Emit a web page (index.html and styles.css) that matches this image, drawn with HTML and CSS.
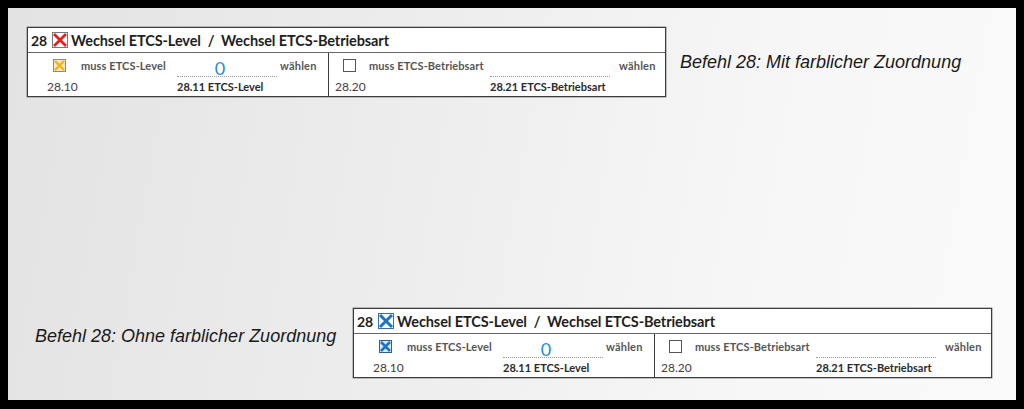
FILE: index.html
```html
<!DOCTYPE html>
<html lang="de">
<head>
<meta charset="utf-8">
<title>Befehl 28</title>
<link rel="stylesheet" href="styles.css">
</head>
<body>
<div class="frame">
  <div class="row1">
    <div class="panel">
      <div class="head">
        <span class="num">28</span>
        <svg class="hchk" width="16" height="16" viewBox="0 0 16 16"><rect x="0.5" y="0.5" width="15" height="15" fill="#fff" stroke="#777"/><path d="M2 2 L14 14 M14 2 L2 14" stroke="#e8201c" stroke-width="2.8" stroke-linecap="butt"/></svg>
        <span class="title">Wechsel ETCS-Level&nbsp; /&nbsp; Wechsel ETCS-Betriebsart</span>
      </div>
      <div class="body">
        <div class="cell c1">
          <div class="r1">
            <svg class="chk" width="13" height="13" viewBox="0 0 13 13"><rect x="0.5" y="0.5" width="12" height="12" fill="#f3e7c8" stroke="#8a8a8a"/><path d="M2 2 L11 11 M11 2 L2 11" stroke="#f6b400" stroke-width="2.4" stroke-linecap="butt"/></svg>
            <span class="lbl">muss ETCS-Level</span>
          </div>
          <div class="field"><span class="val">0</span></div>
          <span class="waehlen">wählen</span>
          <span class="id">28.10</span>
          <span class="flbl">28.11 ETCS-Level</span>
        </div>
        <div class="cell c2">
          <div class="r1">
            <svg class="chk" width="13" height="13" viewBox="0 0 13 13"><rect x="0.5" y="0.5" width="12" height="12" fill="#fff" stroke="#555"/></svg>
            <span class="lbl">muss ETCS-Betriebsart</span>
          </div>
          <div class="field"></div>
          <span class="waehlen">wählen</span>
          <span class="id">28.20</span>
          <span class="flbl">28.21 ETCS-Betriebsart</span>
        </div>
      </div>
    </div>
    <div class="caption cap1">Befehl 28: Mit farblicher Zuordnung</div>
  </div>
  <div class="row2">
    <div class="caption cap2">Befehl 28: Ohne farblicher Zuordnung</div>
    <div class="panel">
      <div class="head">
        <span class="num">28</span>
        <svg class="hchk" width="16" height="16" viewBox="0 0 16 16"><rect x="0.5" y="0.5" width="15" height="15" fill="#fff" stroke="#3a6ea8"/><path d="M2 2 L14 14 M14 2 L2 14" stroke="#1b75c4" stroke-width="3" stroke-linecap="butt"/></svg>
        <span class="title">Wechsel ETCS-Level&nbsp; /&nbsp; Wechsel ETCS-Betriebsart</span>
      </div>
      <div class="body">
        <div class="cell c1">
          <div class="r1">
            <svg class="chk" width="13" height="13" viewBox="0 0 13 13"><rect x="0.5" y="0.5" width="12" height="12" fill="#dbe9f6" stroke="#2a5f99"/><path d="M2 2 L11 11 M11 2 L2 11" stroke="#1b75c4" stroke-width="2.6" stroke-linecap="butt"/></svg>
            <span class="lbl">muss ETCS-Level</span>
          </div>
          <div class="field"><span class="val">0</span></div>
          <span class="waehlen">wählen</span>
          <span class="id">28.10</span>
          <span class="flbl">28.11 ETCS-Level</span>
        </div>
        <div class="cell c2">
          <div class="r1">
            <svg class="chk" width="13" height="13" viewBox="0 0 13 13"><rect x="0.5" y="0.5" width="12" height="12" fill="#fff" stroke="#555"/></svg>
            <span class="lbl">muss ETCS-Betriebsart</span>
          </div>
          <div class="field"></div>
          <span class="waehlen">wählen</span>
          <span class="id">28.20</span>
          <span class="flbl">28.21 ETCS-Betriebsart</span>
        </div>
      </div>
    </div>
  </div>
</div>
</body>
</html>
```

FILE: styles.css
```css
html, body {
  margin: 0;
  padding: 0;
  background: #000;
}
body {
  width: 1024px;
  height: 409px;
  overflow: hidden;
}
.frame {
  margin: 8px;
  width: 1008px;
  height: 392px;
  box-sizing: border-box;
  padding: 19px 0 0 19px;
  background: linear-gradient(100deg, #e3e3e3 0%, #ededed 40%, #f7f7f7 75%, #fafafa 100%);
  font-family: Lato, "Liberation Sans", sans-serif;
}
.row1 {
  display: flex;
  align-items: center;
}
.row2 {
  display: flex;
  align-items: flex-start;
  margin-top: 211px;
  margin-left: 8px;
}
.caption {
  font-family: "Liberation Sans", Arial, sans-serif;
  font-style: italic;
  font-size: 18px;
  line-height: 21px;
  color: #1a1a1a;
  white-space: nowrap;
}
.cap1 {
  margin-left: 14px;
  margin-top: 1px;
}
.cap2 {
  width: 318px;
  margin-top: 18px;
}
.panel {
  width: 639px;
  height: 70px;
  box-sizing: border-box;
  border: 1px solid #3c3c3c;
  background: #fff;
  display: flex;
  flex-direction: column;
  box-shadow: 0 0 0 0.5px #888;
}
.head {
  height: 24px;
  border-bottom: 1px solid #666;
  display: flex;
  align-items: center;
  padding-left: 3px;
  color: #1e1e1e;
}
.num {
  font-size: 14px;
  font-weight: 700;
  width: 21px;
  margin-top: 1px;
}
.hchk {
  display: block;
}
.title {
  font-size: 14.5px;
  font-weight: 700;
  margin-left: 3px;
  letter-spacing: -0.1px;
}
.body {
  flex: 1;
  display: flex;
}
.cell {
  display: grid;
  grid-template-rows: 25px 17px;
  align-items: start;
  font-size: 11px;
  font-weight: 700;
}
.c1 {
  width: 300px;
  border-right: 1px solid #3c3c3c;
  grid-template-columns: 149px 100px auto;
}
.c2 {
  flex: 1;
  grid-template-columns: 161px 120px auto;
}
.r1 {
  display: flex;
  align-items: flex-start;
  padding-top: 6px;
}
.c1 .r1 { padding-left: 25px; }
.c2 .r1 { padding-left: 14px; }
.chk {
  display: block;
  flex: none;
}
.lbl {
  color: #555;
  line-height: 13px;
  letter-spacing: 0.1px;
}
.c1 .lbl { margin-left: 15px; }
.c2 .lbl { margin-left: 13px; }
.field {
  height: 24px;
  box-sizing: border-box;
  border-bottom: 1px dotted #9a9a9a;
  text-align: center;
  padding-top: 7px;
}
.val {
  color: #1f8ed6;
  font-size: 18px;
  font-weight: 400;
  line-height: 16px;
  display: inline-block;
  margin-left: -14px;
}
.waehlen {
  color: #555;
  line-height: 13px;
  padding-top: 6px;
  letter-spacing: 0.2px;
}
.c1 .waehlen { padding-left: 3px; }
.c2 .waehlen { padding-left: 9px; }
.id {
  color: #4e3838;
  font-weight: 400;
  font-size: 12px;
  line-height: 14px;
  padding-top: 2px;
}
.c1 .id { padding-left: 19px; }
.c2 .id { padding-left: 6px; }
.flbl {
  color: #2a2a2a;
  line-height: 14px;
  padding-top: 2px;
  white-space: nowrap;
  grid-column: 2 / 4;
}
```
